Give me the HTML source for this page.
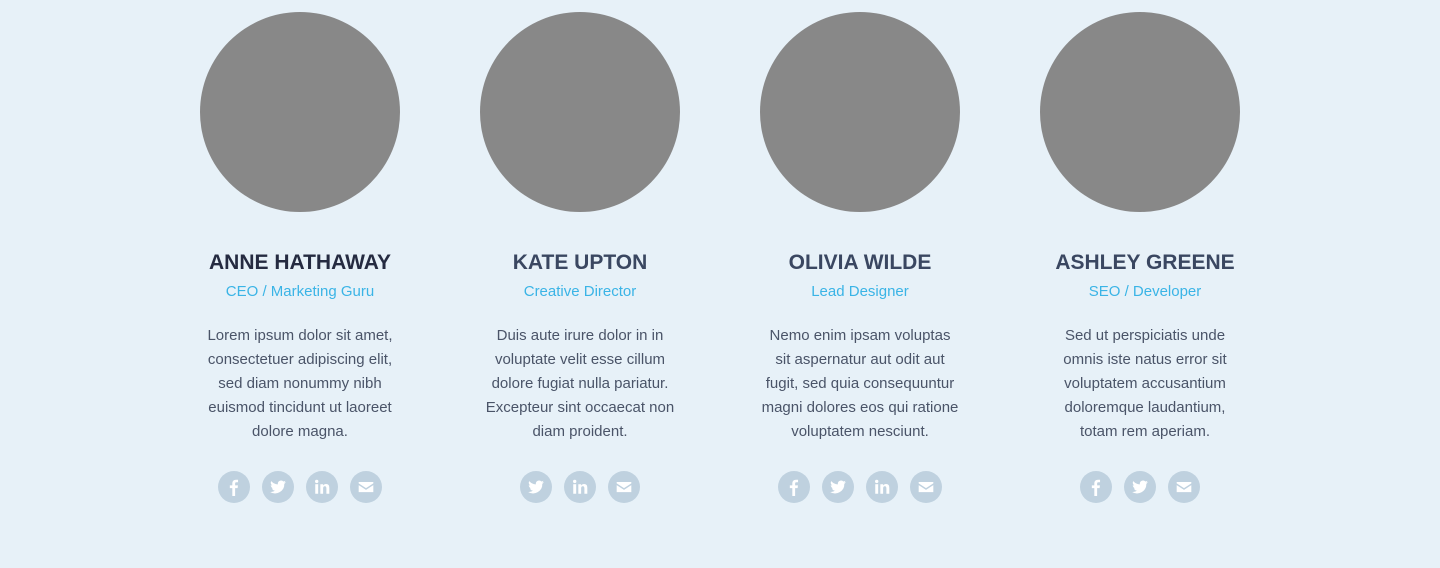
<!DOCTYPE html>
<html><head><meta charset="utf-8"><style>
body{margin:0;width:1440px;height:568px;background:#e7f1f8;font-family:"Liberation Sans",sans-serif;position:relative;overflow:hidden}
.c{position:absolute;top:0;width:260px;text-align:center}
.av{width:200px;height:200px;border-radius:50%;background:#888;margin:12px auto 0}
h2{margin:37px 0 0;font-size:21px;line-height:28px;font-weight:bold;color:#3a4761;letter-spacing:0}
.r{font-size:15px;color:#3ab4e6;margin-top:5px;line-height:20px}
p{font-size:15px;line-height:24px;color:#4a5468;margin:22px 0 0}
.ic{display:flex;justify-content:center;gap:12px;margin-top:27px}
.ic span{width:32px;height:32px;border-radius:50%;background:#bfd1df;display:flex;align-items:center;justify-content:center}
</style></head><body>
<svg width="0" height="0" style="position:absolute"><defs>
<symbol id="f" viewBox="0 0 16 16"><path d="M9 16V9h2.2l.3-2.5H9V5c0-.7.2-1.2 1.2-1.2h1.4V1.6C11.3 1.5 10.6 1.5 9.8 1.5 7.8 1.5 6.5 2.7 6.5 4.9v1.6H4.3V9h2.2v7z" fill="#fff"/></symbol>
<symbol id="t" viewBox="0 0 16 16"><path d="M15 3.5c-.5.2-1.1.4-1.6.5.6-.4 1-.9 1.2-1.6-.6.3-1.2.6-1.8.7a2.9 2.9 0 0 0-4.9 2.6C5.5 5.6 3.4 4.5 2 2.8c-.8 1.3-.4 3 .9 3.8-.5 0-.9-.1-1.3-.3 0 1.4 1 2.6 2.3 2.9-.4.1-.9.1-1.3 0 .4 1.2 1.4 2 2.7 2A5.8 5.8 0 0 1 1 12.4 8.2 8.2 0 0 0 13.6 5.1c.6-.4 1-.9 1.4-1.6z" fill="#fff"/></symbol>
<symbol id="l" viewBox="0 0 16 16"><rect x="2" y="5.5" width="2.6" height="8.5" fill="#fff"/><circle cx="3.3" cy="3" r="1.5" fill="#fff"/><path d="M6.5 5.5H9v1.2c.4-.7 1.3-1.4 2.6-1.4 2.4 0 2.9 1.6 2.9 3.6V14h-2.6V9.5c0-1-.1-2.2-1.4-2.2S9 8.3 9 9.4V14H6.5z" fill="#fff"/></symbol>
<symbol id="m" viewBox="0 0 16 16"><path d="M1.5 3.5h13v1.3L8 9 1.5 4.8z M1.5 6.3 8 10.5l6.5-4.2V12.5h-13z" fill="#fff"/></symbol>
</defs></svg>

<div class="c" style="left:170px"><div class="av"></div><h2 style="color:#252b41">ANNE HATHAWAY</h2><div class="r">CEO / Marketing Guru</div>
<p>Lorem ipsum dolor sit amet,<br>consectetuer adipiscing elit,<br>sed diam nonummy nibh<br>euismod tincidunt ut laoreet<br>dolore magna.</p>
<div class="ic"><span><svg width="18" height="18"><use href="#f"/></svg></span><span><svg width="18" height="18"><use href="#t"/></svg></span><span><svg width="18" height="18"><use href="#l"/></svg></span><span><svg width="18" height="18"><use href="#m"/></svg></span></div></div>

<div class="c" style="left:450px"><div class="av"></div><h2>KATE UPTON</h2><div class="r">Creative Director</div>
<p>Duis aute irure dolor in in<br>voluptate velit esse cillum<br>dolore fugiat nulla pariatur.<br>Excepteur sint occaecat non<br>diam proident.</p>
<div class="ic"><span><svg width="18" height="18"><use href="#t"/></svg></span><span><svg width="18" height="18"><use href="#l"/></svg></span><span><svg width="18" height="18"><use href="#m"/></svg></span></div></div>

<div class="c" style="left:730px"><div class="av"></div><h2>OLIVIA WILDE</h2><div class="r">Lead Designer</div>
<p>Nemo enim ipsam voluptas<br>sit aspernatur aut odit aut<br>fugit, sed quia consequuntur<br>magni dolores eos qui ratione<br>voluptatem nesciunt.</p>
<div class="ic"><span><svg width="18" height="18"><use href="#f"/></svg></span><span><svg width="18" height="18"><use href="#t"/></svg></span><span><svg width="18" height="18"><use href="#l"/></svg></span><span><svg width="18" height="18"><use href="#m"/></svg></span></div></div>

<div class="c" style="left:1010px"><div class="av"></div><div style="margin-left:10px"><h2>ASHLEY GREENE</h2><div class="r">SEO / Developer</div>
<p>Sed ut perspiciatis unde<br>omnis iste natus error sit<br>voluptatem accusantium<br>doloremque laudantium,<br>totam rem aperiam.</p></div>
<div class="ic"><span><svg width="18" height="18"><use href="#f"/></svg></span><span><svg width="18" height="18"><use href="#t"/></svg></span><span><svg width="18" height="18"><use href="#m"/></svg></span></div></div>
</body></html>
